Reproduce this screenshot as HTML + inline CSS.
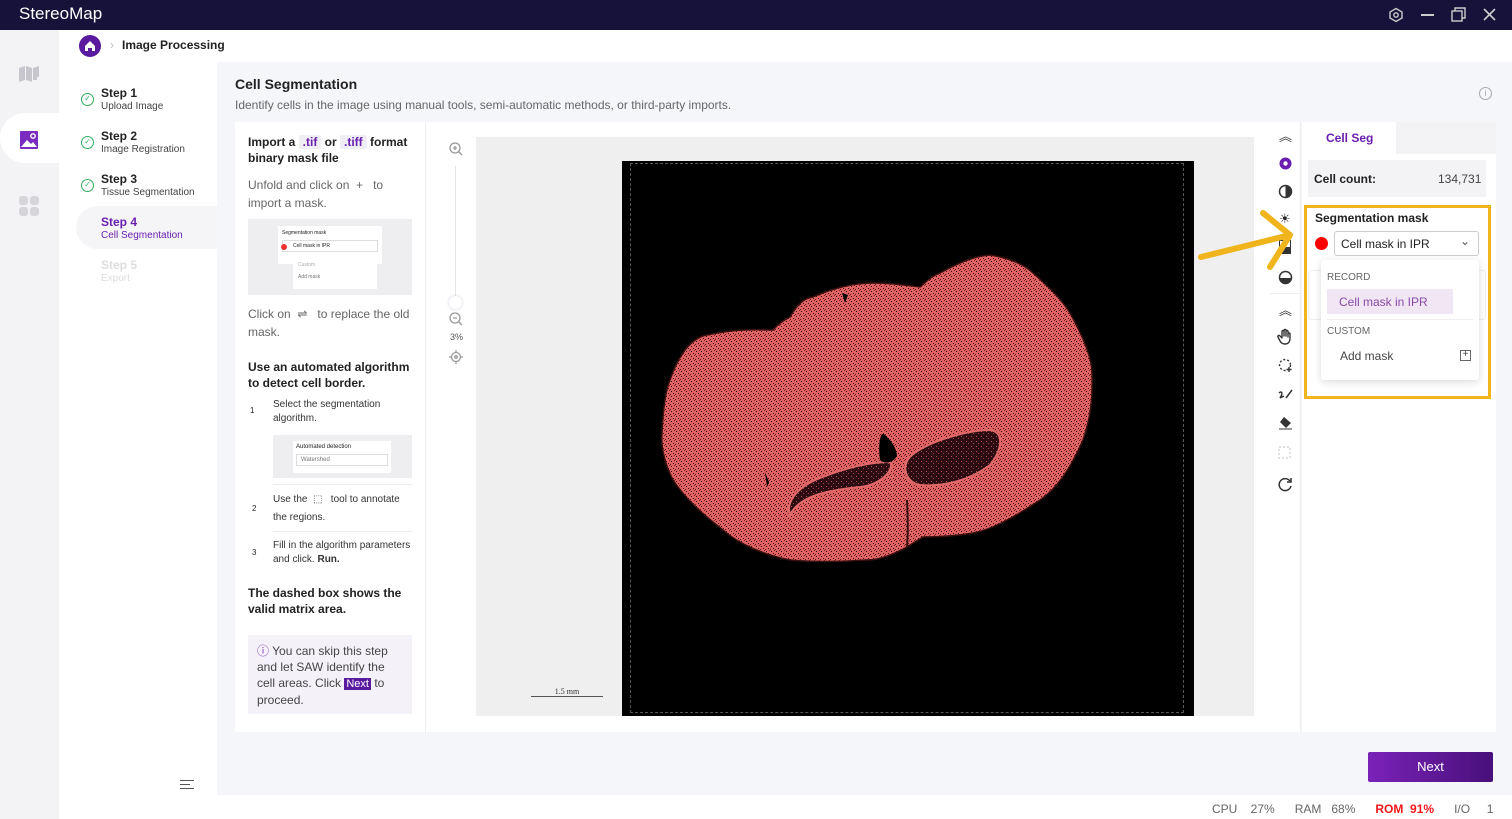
<!DOCTYPE html>
<html><head><meta charset="utf-8"><style>
*{box-sizing:border-box;margin:0;padding:0}
body{width:1512px;height:819px;overflow:hidden;font-family:"Liberation Sans",sans-serif;background:#f5f6f9;position:relative;color:#222}
.a{position:absolute}
.top{left:0;top:0;width:1512px;height:30px;background:#16123a;color:#fff}
.g{color:#666}
.b{font-weight:bold}
.chip{background:#f0eef5;color:#6a1fb0;padding:0 4px;border-radius:2px}
</style></head><body>
<div class="a top">
 <div class="a" style="left:19px;top:4px;font-size:17px">StereoMap</div>
 <svg class="a" style="left:1388px;top:7px" width="16" height="16" viewBox="0 0 16 16" fill="none" stroke="#ccc" stroke-width="1.4"><polygon points="8,1.5 14,5 14,11 8,14.5 2,11 2,5"/><circle cx="8" cy="8" r="2.2"/></svg>
 <div class="a" style="left:1421px;top:14px;width:13px;height:1.5px;background:#ccc"></div>
 <svg class="a" style="left:1451px;top:7px" width="15" height="15" fill="none" stroke="#ccc" stroke-width="1.4"><rect x="1" y="4" width="10" height="10"/><path d="M4 4V1h10v10h-3"/></svg>
 <svg class="a" style="left:1482px;top:7px" width="15" height="15" stroke="#ccc" stroke-width="1.6"><path d="M2 2L13 13M13 2L2 13"/></svg>
</div>
<div class="a" style="left:0;top:30px;width:59px;height:789px;background:#f3f3f6"></div>
<div class="a" style="left:0;top:113px;width:59px;height:50px;background:#fff;border-radius:25px 0 0 25px"></div>
<svg class="a" style="left:18px;top:65px" width="24" height="18" fill="#c6c6cc"><path d="M1 3l6-2v14l-6 2zM8 1l6 2v14l-6-2zM15 3l6-2v11h-2v3h-4z"/></svg>
<svg class="a" style="left:19px;top:130px" width="20" height="20"><rect x="1" y="1" width="18" height="18" rx="1" fill="#7b2cc0"/><path d="M2 17l6-7 4 4 2-2 4 5z" fill="#fff"/><circle cx="14" cy="6" r="2.2" fill="none" stroke="#fff" stroke-width="1.4"/></svg>
<svg class="a" style="left:19px;top:196px" width="22" height="22" fill="#d6d6da"><rect x="0" y="0" width="9" height="9" rx="3"/><rect x="11" y="0" width="9" height="9" rx="3"/><rect x="0" y="11" width="9" height="9" rx="3"/><rect x="11" y="11" width="9" height="9" rx="3"/></svg>
<div class="a" style="left:59px;top:30px;width:158px;height:789px;background:#fff"></div>
<div class="a" style="left:59px;top:30px;width:1453px;height:32px;background:#fff"></div>
<svg class="a" style="left:79px;top:35px" width="22" height="22"><circle cx="11" cy="11" r="11" fill="#5a1a9e"/><path d="M6 11l5-5 5 5v5h-3v-3h-4v3H6z" fill="#fff"/></svg>
<div class="a" style="left:110px;top:38px;font-size:12px;color:#bbb">›</div>
<div class="a b" style="left:122px;top:38px;font-size:12px">Image Processing</div>
<div class="a" style="left:76px;top:206px;width:141px;height:43px;background:#f5f5f8;border-radius:22px 0 0 22px"></div>
<div class="a" style="left:81px;top:87px;line-height:13px">
 <div style="height:43px;padding-left:20px;position:relative"><span class="a" style="left:0;top:6px;width:13px;height:13px;border:1.3px solid #2fae5b;border-radius:50%;color:#2fae5b;font-size:8px;text-align:center;line-height:10px">✓</span><div class="b" style="font-size:12px">Step 1</div><div style="font-size:10px;color:#444">Upload Image</div></div>
 <div style="height:43px;padding-left:20px;position:relative"><span class="a" style="left:0;top:6px;width:13px;height:13px;border:1.3px solid #2fae5b;border-radius:50%;color:#2fae5b;font-size:8px;text-align:center;line-height:10px">✓</span><div class="b" style="font-size:12px">Step 2</div><div style="font-size:10px;color:#444">Image Registration</div></div>
 <div style="height:43px;padding-left:20px;position:relative"><span class="a" style="left:0;top:6px;width:13px;height:13px;border:1.3px solid #2fae5b;border-radius:50%;color:#2fae5b;font-size:8px;text-align:center;line-height:10px">✓</span><div class="b" style="font-size:12px">Step 3</div><div style="font-size:10px;color:#444">Tissue Segmentation</div></div>
 <div style="height:43px;padding-left:20px;color:#6a1fb0"><div class="b" style="font-size:12px">Step 4</div><div style="font-size:10px">Cell Segmentation</div></div>
 <div style="height:43px;padding-left:20px;color:#ddd"><div class="b" style="font-size:12px">Step 5</div><div style="font-size:10px">Export</div></div>
</div>
<div class="a" style="left:180px;top:780px;width:14px;border-top:1.4px solid #555;height:9px;border-bottom:1.4px solid #555"></div><div class="a" style="left:180px;top:784px;width:10px;height:1.4px;background:#555"></div>
<div class="a b" style="left:235px;top:76px;font-size:14px">Cell Segmentation</div>
<div class="a g" style="left:235px;top:98px;font-size:12px">Identify cells in the image using manual tools, semi-automatic methods, or third-party imports.</div>
<div class="a" style="left:1479px;top:87px;width:13px;height:13px;border:1px solid #aaa;border-radius:50%;font-size:9px;color:#aaa;text-align:center;line-height:11px">i</div>
<div class="a" style="left:235px;top:122px;width:1066px;height:610px;background:#fff"></div>
<div class="a" style="left:425px;top:122px;width:1px;height:610px;background:#eee"></div>
<div class="a" style="left:248px;top:134px;width:166px;font-size:12px;line-height:16px">
 <div class="b">Import a <span class="chip">.tif</span> or <span class="chip">.tiff</span> format binary mask file</div>
 <div class="g" style="margin-top:10px;line-height:18px">Unfold and click on &nbsp;+&nbsp;&nbsp; to import a mask.</div>
</div>
<div class="a" style="left:248px;top:219px;width:164px;height:76px;background:#eeeef0">
 <div class="a" style="left:30px;top:7px;width:104px;height:38px;background:#fff;font-size:5px;padding:4px">Segmentation mask<div style="margin-top:4px;border:1px solid #ddd;padding:2px 10px;position:relative"><span class="a" style="left:-2px;top:3px;width:6px;height:6px;border-radius:50%;background:#e33"></span>Cell mask in IPR</div></div>
 <div class="a" style="left:45px;top:40px;width:84px;height:30px;background:#fff;font-size:5px;color:#aaa;padding:3px 5px">Custom<br><br><span style="color:#777">Add mask</span></div>
</div>
<div class="a g" style="left:248px;top:305px;width:166px;font-size:12px;line-height:18px">Click on &nbsp;⇌&nbsp;&nbsp; to replace the old mask.</div>
<div class="a b" style="left:248px;top:359px;width:166px;font-size:12px;line-height:16px">Use an automated algorithm to detect cell border.</div>
<div class="a" style="left:250px;top:406px;font-size:8px">1</div>
<div class="a" style="left:273px;top:398px;width:140px;font-size:10px;line-height:14px;color:#333">Select the segmentation algorithm.</div>
<div class="a" style="left:273px;top:435px;width:139px;height:43px;background:#eeeef0"><div class="a" style="left:20px;top:6px;width:98px;height:32px;background:#fff;font-size:6px;padding:3px">Automated detection<div style="border:1px solid #ddd;margin-top:4px;padding:2px 4px;color:#777">Watershed</div></div></div>
<div class="a" style="left:273px;top:484px;width:139px;height:1px;background:#eee"></div>
<div class="a" style="left:252px;top:504px;font-size:8px">2</div>
<div class="a" style="left:273px;top:491px;width:140px;font-size:10px;line-height:18px;color:#333">Use the &nbsp;⬚&nbsp;&nbsp; tool to annotate the regions.</div>
<div class="a" style="left:273px;top:531px;width:139px;height:1px;background:#eee"></div>
<div class="a" style="left:252px;top:548px;font-size:8px">3</div>
<div class="a" style="left:273px;top:539px;width:140px;font-size:10px;line-height:14px;color:#333">Fill in the algorithm parameters and click. <b>Run.</b></div>
<div class="a b" style="left:248px;top:585px;width:166px;font-size:12px;line-height:16px">The dashed box shows the valid matrix area.</div>
<div class="a" style="left:248px;top:635px;width:164px;height:79px;background:#f4f2f8;padding:8px 9px;font-size:12px;line-height:16px;color:#444"><span style="color:#7b2cc0">ⓘ</span> You can skip this step and let SAW identify the cell areas. Click <span style="background:#5a1a9e;color:#fff;padding:0 2px;font-size:11px">Next</span> to proceed.</div>
<svg class="a" style="left:449px;top:142px" width="14" height="14" fill="none" stroke="#999" stroke-width="1.3"><circle cx="6" cy="6" r="5"/><path d="M9.5 9.5L13 13M4 6h4M6 4v4"/></svg>
<div class="a" style="left:455px;top:166px;width:1px;height:135px;background:#e5e5e5"></div>
<div class="a" style="left:449px;top:296px;width:13px;height:13px;border-radius:50%;background:#fff;box-shadow:0 0 3px #ccd"></div>
<svg class="a" style="left:449px;top:312px" width="14" height="14" fill="none" stroke="#999" stroke-width="1.3"><circle cx="6" cy="6" r="5"/><path d="M9.5 9.5L13 13M4 6h4"/></svg>
<div class="a" style="left:450px;top:332px;font-size:9px;color:#555">3%</div>
<svg class="a" style="left:449px;top:350px" width="14" height="14" fill="none" stroke="#999" stroke-width="1.3"><circle cx="7" cy="7" r="4.5"/><circle cx="7" cy="7" r="1.3"/><path d="M7 0v2.5M7 11.5V14M0 7h2.5M11.5 7H14"/></svg>
<div class="a" style="left:476px;top:137px;width:778px;height:579px;background:#efefef"></div>
<div class="a" style="left:622px;top:161px;width:572px;height:555px;background:#000"></div>
<div class="a" style="left:630px;top:163px;width:554px;height:550px;border:1px dashed #555"></div>
<div class="a" style="left:531px;top:687px;width:72px;text-align:center;font-family:'Liberation Serif',serif;font-size:8px;color:#333;border-bottom:1px solid #555">1.5 mm</div>
<svg class="a" style="left:622px;top:161px" width="572" height="555" viewBox="622 161 572 555">
 <defs><pattern id="n" width="5" height="5" patternUnits="userSpaceOnUse"><rect width="5" height="5" fill="#e06262"/><rect x="1" y="1" width="1" height="1" fill="#2a0a0a"/><rect x="3" y="3" width="1" height="1" fill="#3a1010"/><rect x="4" y="0" width="1" height="1" fill="#7a2424"/><rect x="0" y="4" width="1" height="1" fill="#5a1a1a"/></pattern>
 <pattern id="d" width="5" height="5" patternUnits="userSpaceOnUse"><rect width="5" height="5" fill="#2a0c12"/><rect x="1" y="1" width="1" height="1" fill="#c05050"/><rect x="3" y="3" width="1" height="1" fill="#a04040"/></pattern></defs>
 <path d="M683 353 C690 342 700 336 707 335 C740 328 760 330 773 330 C780 322 785 320 790 317 C798 303 805 298 813 297 C840 285 860 283 873 283 C895 283 910 286 920 287 C928 280 932 276 940 273 C960 262 975 256 990 255 C1010 258 1025 265 1033 273 C1050 288 1062 300 1070 313 C1085 340 1092 360 1092 373 C1093 400 1090 420 1083 440 C1070 470 1055 490 1040 500 C1010 520 990 530 973 533 C950 537 930 537 923 537 C915 542 910 545 907 547 C890 556 878 560 867 560 C840 562 810 562 790 560 C765 555 740 545 723 530 C700 512 685 498 673 480 C663 460 661 445 662 433 C663 410 665 392 670 380 C674 368 678 360 683 353Z" fill="url(#n)" stroke="#3a1010" stroke-width="1.5"/>
 <path d="M790 515 C800 495 830 490 860 487 C880 485 895 470 890 462 C870 462 845 468 820 478 C800 486 785 500 790 515Z" fill="url(#d)" stroke="#e06a6a" stroke-width="2"/>
 <path d="M912 455 C930 440 970 430 990 430 C1005 432 1002 450 990 465 C970 480 945 487 920 485 C905 482 900 465 912 455Z" fill="url(#d)" stroke="#e06a6a" stroke-width="2"/>
 <path d="M885 435 C880 430 878 445 880 460 C885 465 895 462 897 455 C895 445 890 440 885 435Z" fill="#000"/>
 <path d="M842 293 l6 2 l-3 8z" fill="#000"/>
 <path d="M765 472 l4 10 l-2 5z" fill="#000"/>
 <path d="M907 500 C908 520 908 535 907 547" stroke="#3a1010" stroke-width="2" fill="none"/>
</svg>
<div class="a" style="left:1270px;top:122px;width:31px;height:610px;background:#fff;border-right:1px solid #eee"></div>
<div class="a" style="left:1279px;top:126px;font-size:13px;color:#333">︽</div>
<svg class="a" style="left:1278px;top:156px" width="15" height="15"><circle cx="7.5" cy="7.5" r="6" fill="#6a1fb0"/><circle cx="7.5" cy="7.5" r="2.2" fill="#fff"/></svg>
<svg class="a" style="left:1278px;top:184px" width="15" height="15"><circle cx="7.5" cy="7.5" r="6" fill="none" stroke="#333" stroke-width="1.5"/><path d="M7.5 1.5a6 6 0 010 12z" fill="#333"/></svg>
<div class="a" style="left:1279px;top:211px;font-size:13px">☀</div>
<div class="a" style="left:1279px;top:240px;width:12px;height:14px;border:1.5px solid #333;background:linear-gradient(#fff 50%,#333 50%)"></div>
<svg class="a" style="left:1278px;top:270px" width="15" height="15"><circle cx="7.5" cy="7.5" r="6" fill="none" stroke="#333" stroke-width="1.5"/><path d="M1.5 8h12a6 6 0 01-12 0z" fill="#333"/></svg>
<div class="a" style="left:1270px;top:293px;width:30px;height:1px;background:#eee"></div>
<div class="a" style="left:1279px;top:300px;font-size:13px;color:#333">︽</div>
<svg class="a" style="left:1277px;top:328px" width="17" height="17" fill="none" stroke="#333" stroke-width="1.4" stroke-linecap="round"><path d="M5 9V3.5a1 1 0 012 0V8M7 7V2.5a1 1 0 012 0V8M9 7.5V3.5a1 1 0 012 0V9M11 9V6a1 1 0 012 0v4c0 4-2 6-5 6s-4-1-6-5l-1-2a1 1 0 012-1l2 2"/></svg>
<svg class="a" style="left:1278px;top:358px" width="15" height="15" fill="none" stroke="#333" stroke-width="1.4"><circle cx="7" cy="7" r="5.5" stroke-dasharray="2 2"/><path d="M11 9v5M8.5 11.5h5"/></svg>
<svg class="a" style="left:1278px;top:386px" width="15" height="15" fill="none" stroke="#333" stroke-width="1.5"><path d="M1 7c3-3 4 1 1 5l4-2M8 12l6-8"/></svg>
<svg class="a" style="left:1278px;top:415px" width="15" height="15"><path d="M6 2l7 6-5 5-6-6z" fill="#333"/><path d="M1 14h13" stroke="#333"/></svg>
<svg class="a" style="left:1278px;top:446px" width="15" height="15" fill="none" stroke="#ccc" stroke-width="1.2"><rect x="1" y="1" width="11" height="11" stroke-dasharray="2 2"/></svg>
<svg class="a" style="left:1278px;top:477px" width="15" height="15" fill="none" stroke="#333" stroke-width="1.5"><path d="M12 4a6 6 0 10 1 5"/><path d="M13 1v4H9"/></svg>
<div class="a" style="left:1302px;top:122px;width:194px;height:610px;background:#fff"></div>
<div class="a" style="left:1396px;top:122px;width:100px;height:32px;background:#f3f3f5"></div>
<div class="a b" style="left:1326px;top:131px;font-size:12px;color:#6a1fb0">Cell Seg</div>
<div class="a" style="left:1308px;top:160px;width:178px;height:37px;background:#f3f3f5"></div>
<div class="a b" style="left:1314px;top:172px;font-size:12px">Cell count:</div>
<div class="a" style="left:1438px;top:172px;font-size:12px;color:#444">134,731</div>
<div class="a" style="left:1308px;top:270px;width:178px;height:50px;border:1px solid #eee;border-radius:3px"></div>
<div class="a" style="left:1304px;top:205px;width:187px;height:194px;border:3px solid #f0b41c"></div>
<div class="a b" style="left:1315px;top:211px;font-size:12px">Segmentation mask</div>
<div class="a" style="left:1315px;top:237px;width:13px;height:13px;border-radius:50%;background:#f00"></div>
<div class="a" style="left:1334px;top:231px;width:145px;height:25px;border:1px solid #ccc;border-radius:3px;font-size:12px;padding:5px 6px">Cell mask in IPR<span class="a" style="right:8px;top:2px;color:#555">⌄</span></div>
<div class="a" style="left:1321px;top:260px;width:158px;height:120px;background:#fff;box-shadow:0 2px 8px rgba(0,0,0,.15);border-radius:3px"></div>
<div class="a" style="left:1327px;top:272px;font-size:10px;color:#666">RECORD</div>
<div class="a" style="left:1327px;top:289px;width:126px;height:25px;background:#f0e6f4;color:#8a4aa8;font-size:12px;padding:6px 12px">Cell mask in IPR</div>
<div class="a" style="left:1327px;top:319px;width:146px;height:1px;background:#eee"></div>
<div class="a" style="left:1327px;top:326px;font-size:10px;color:#666">CUSTOM</div>
<div class="a" style="left:1340px;top:349px;font-size:12px;color:#444">Add mask</div>
<div class="a" style="left:1460px;top:350px;width:11px;height:11px;border:1px solid #666;font-size:10px;line-height:8px;text-align:center;color:#444">+</div>
<svg class="a" style="left:1195px;top:205px" width="105" height="70"><path d="M6 52L95 30M68 8L95 30L75 62" fill="none" stroke="#f0b41c" stroke-width="6" stroke-linecap="round" stroke-linejoin="round"/></svg>
<div class="a" style="left:1368px;top:752px;width:125px;height:30px;background:linear-gradient(90deg,#7a22b8,#48107a);border-radius:2px;color:#fff;font-size:13px;text-align:center;line-height:30px">Next</div>
<div class="a" style="left:217px;top:795px;width:1295px;height:24px;background:#fff"></div>
<div class="a" style="left:1212px;top:802px;font-size:12px;color:#666;white-space:nowrap">CPU&nbsp;&nbsp;&nbsp;&nbsp;27%&nbsp;&nbsp;&nbsp;&nbsp;&nbsp;&nbsp;RAM&nbsp;&nbsp;&nbsp;68%&nbsp;&nbsp;&nbsp;&nbsp;&nbsp;&nbsp;<b style="color:#f01818">ROM&nbsp;&nbsp;91%</b>&nbsp;&nbsp;&nbsp;&nbsp;&nbsp;&nbsp;I/O&nbsp;&nbsp;&nbsp;&nbsp;&nbsp;1</div>
</body></html>
